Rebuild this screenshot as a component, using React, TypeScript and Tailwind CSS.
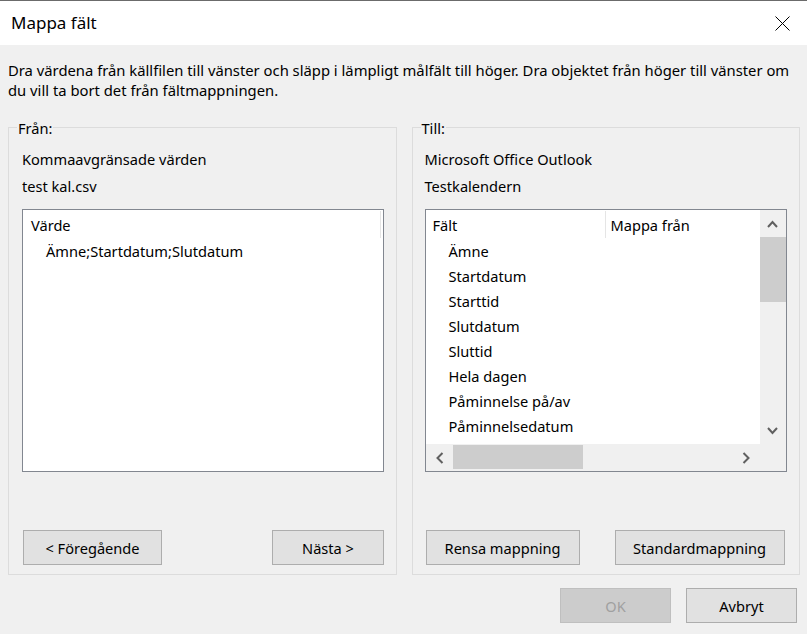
import React from "react";

const Chevron = ({ dir }: { dir: "up" | "down" | "left" | "right" }) => {
  if (dir === "up")
    return (
      <svg width="11" height="8" viewBox="0 0 11 8">
        <path d="M1 7 L5.5 2 L10 7" fill="none" stroke="#606060" strokeWidth="2" />
      </svg>
    );
  if (dir === "down")
    return (
      <svg width="11" height="8" viewBox="0 0 11 8">
        <path d="M1 1 L5.5 6 L10 1" fill="none" stroke="#606060" strokeWidth="2" />
      </svg>
    );
  if (dir === "left")
    return (
      <svg width="9" height="12" viewBox="0 0 9 12">
        <path d="M7.5 1 L2.5 6 L7.5 11" fill="none" stroke="#606060" strokeWidth="2" />
      </svg>
    );
  return (
    <svg width="9" height="12" viewBox="0 0 9 12">
      <path d="M1.5 1 L6.5 6 L1.5 11" fill="none" stroke="#606060" strokeWidth="2" />
    </svg>
  );
};

const Btn = ({
  children,
  className = "",
  disabled = false,
}: {
  children: React.ReactNode;
  className?: string;
  disabled?: boolean;
}) => (
  <div
    className={
      "h-[35px] border flex items-center justify-center " +
      (disabled
        ? "bg-[#cccccc] border-[#bfbfbf] text-[#a0a0a0] "
        : "bg-[#e1e1e1] border-[#adadad] text-black ") +
      className
    }
  >
    {children}
  </div>
);

const GroupBox = ({
  legend,
  children,
  className = "",
}: {
  legend: string;
  children: React.ReactNode;
  className?: string;
}) => (
  <div className={"relative w-[389px] h-full border border-[#dcdcdc] flex flex-col pt-[21px] " + className}>
    <span className="absolute left-[8px] top-[-10px] px-[1px] bg-[#f0f0f0] leading-[20px]">{legend}</span>
    {children}
  </div>
);

const fields = [
  "Ämne",
  "Startdatum",
  "Starttid",
  "Slutdatum",
  "Sluttid",
  "Hela dagen",
  "Påminnelse på/av",
  "Påminnelsedatum",
];

export default function App() {
  return (
    <div className="w-[807px] h-[634px] bg-[#f0f0f0] flex flex-col border-t border-[#6b6b6b] overflow-hidden text-black font-['Noto_Sans',sans-serif] text-[14.6px] leading-[20px]">
      {/* title bar */}
      <div className="h-[44px] shrink-0 bg-white flex items-center justify-between pl-[11px] pr-[17px]">
        <span className="text-[17px] leading-[24px]">Mappa fält</span>
        <svg width="15" height="15" viewBox="0 0 15 15">
          <path d="M0.5 0.5 L14.5 14.5 M14.5 0.5 L0.5 14.5" stroke="#000" strokeWidth="1" fill="none" />
        </svg>
      </div>

      {/* description */}
      <div className="pt-[15px] pl-[8px] whitespace-nowrap text-[14.8px]">
        Dra värdena från källfilen till vänster och släpp i lämpligt målfält till höger. Dra objektet från höger till vänster om
        <br />
        du vill ta bort det från fältmappningen.
      </div>

      {/* group boxes */}
      <div className="mt-[27px] h-[448px] shrink-0 flex gap-[15px] pl-[8px] pr-[7px]">
        <GroupBox legend="Från:" className="pl-[13px]">
          <div>Kommaavgränsade värden</div>
          <div className="mt-[7px]">test kal.csv</div>
          <div className="mt-[13px] w-[362px] h-[263px] border border-[#828790] bg-white flex flex-col">
            <div className="flex">
              <div className="w-[358px] h-[27px] mt-[1px] border-r border-[#e5e5e5] pl-[8px] pt-[4px]">Värde</div>
            </div>
            <div className="h-[25px] flex items-center pl-[23px]">Ämne;Startdatum;Slutdatum</div>
          </div>
          <div className="mt-[58px] w-[362px] flex justify-between">
            <Btn className="w-[139px] ml-[1px]">&lt; Föregående</Btn>
            <Btn className="w-[112px]">Nästa &gt;</Btn>
          </div>
        </GroupBox>

        <GroupBox legend="Till:" className="pl-[12px]">
          <div>Microsoft Office Outlook</div>
          <div className="mt-[7px]">Testkalendern</div>
          <div className="mt-[13px] w-[362px] h-[263px] border border-[#828790] bg-white flex flex-col">
            <div className="flex h-[234px]">
              <div className="w-[334px] bg-white overflow-hidden flex flex-col">
                <div className="flex">
                  <div className="w-[180px] h-[27px] mt-[1px] border-r border-[#e5e5e5] pl-[7px] pt-[4px]">Fält</div>
                  <div className="h-[27px] mt-[1px] pl-[5px] pt-[4px]">Mappa från</div>
                </div>
                {fields.map((f) => (
                  <div key={f} className="h-[25px] shrink-0 flex items-center pl-[23px]">
                    {f}
                  </div>
                ))}
              </div>
              <div className="w-[26px] bg-[#f0f0f0] flex flex-col">
                <div className="h-[27px] flex items-center justify-center">
                  <Chevron dir="up" />
                </div>
                <div className="h-[65px] bg-[#cdcdcd]" />
                <div className="flex-1" />
                <div className="h-[26px] flex items-center justify-center">
                  <Chevron dir="down" />
                </div>
              </div>
            </div>
            <div className="flex h-[27px]">
              <div className="w-[334px] bg-[#f0f0f0] flex">
                <div className="w-[27px] flex items-center justify-center">
                  <Chevron dir="left" />
                </div>
                <div className="w-[130px] mt-[1px] mb-[2px] bg-[#cdcdcd]" />
                <div className="flex-1" />
                <div className="w-[26px] flex items-center justify-center">
                  <Chevron dir="right" />
                </div>
              </div>
              <div className="w-[26px] bg-[#f0f0f0]" />
            </div>
          </div>
          <div className="mt-[58px] w-[362px] flex justify-between">
            <Btn className="w-[154px] ml-[1px]">Rensa mappning</Btn>
            <Btn className="w-[170px] mr-[2px]">Standardmappning</Btn>
          </div>
        </GroupBox>
      </div>

      {/* bottom buttons */}
      <div className="mt-[13px] flex justify-end gap-[15px] pr-[10px]">
        <Btn className="w-[111px]" disabled>
          OK
        </Btn>
        <Btn className="w-[111px]">Avbryt</Btn>
      </div>
    </div>
  );
}
